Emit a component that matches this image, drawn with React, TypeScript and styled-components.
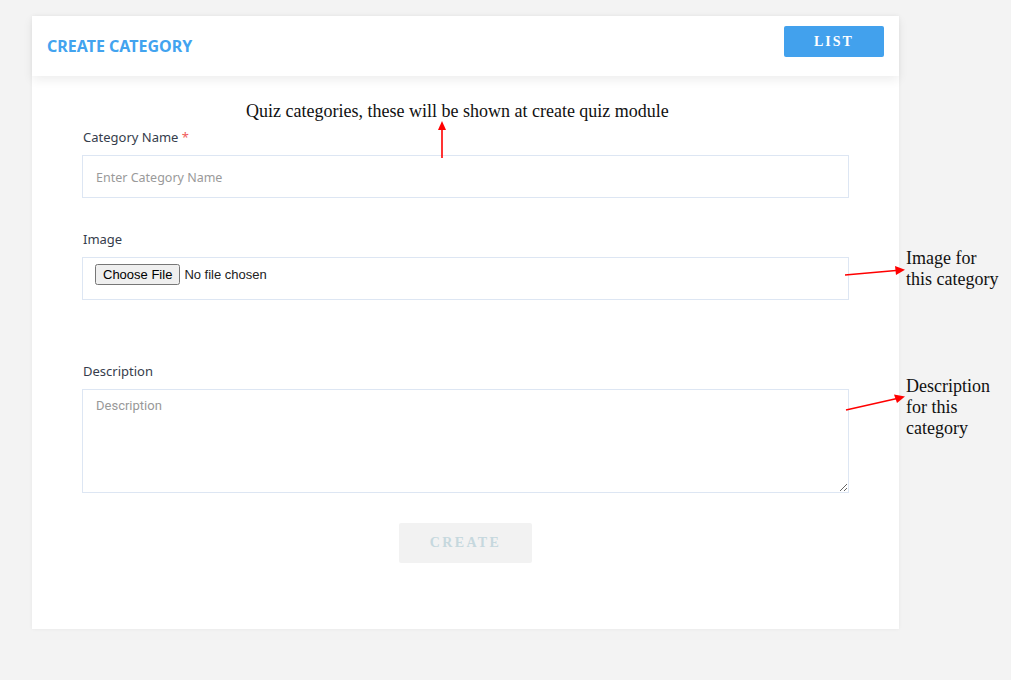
import React from "react";
import styled, { createGlobalStyle } from "styled-components";

const GlobalStyle = createGlobalStyle`
  html, body {
    margin: 0;
    padding: 0;
    background: #f3f3f3;
    font-family: "Noto Sans", "Open Sans", sans-serif;
  }
  * { box-sizing: border-box; }
`;

export default function App() {
  return (
    <>
      <GlobalStyle />
      <Page>
        <Card>
          <Header>
            <Title>CREATE CATEGORY</Title>
            <ListButton>LIST</ListButton>
          </Header>

          <Body>
            <Group>
              <Label>
                Category Name <Required>*</Required>
              </Label>
              <TextInput placeholder="Enter Category Name" />
            </Group>

            <Group $gap={62}>
              <Label>Image</Label>
              <FileBox>
                <input type="file" />
              </FileBox>
            </Group>

            <Group $gap={30}>
              <Label>Description</Label>
              <TextArea placeholder="Description" />
            </Group>

            <Actions>
              <CreateButton disabled>CREATE</CreateButton>
            </Actions>
          </Body>

          <Note $left={214} $top={85}>
            Quiz categories, these will be shown at create quiz module
          </Note>
          <Arrow $left={404} $top={105} width="12" height="38" viewBox="0 0 12 38">
            <line x1="6" y1="37" x2="6" y2="8" stroke="#f00" strokeWidth="1.6" />
            <polygon points="6,0 2,9 10,9" fill="#f00" />
          </Arrow>

          <Note $left={874} $top={232} $width={96}>
            Image for this category
          </Note>
          <Arrow $left={812} $top={248} width="62" height="14" viewBox="0 0 62 14">
            <line x1="1" y1="11" x2="52" y2="6.5" stroke="#f00" strokeWidth="1.6" />
            <polygon points="61,5.8 51,2 52,11" fill="#f00" />
          </Arrow>

          <Note $left={874} $top={360} $width={96}>
            Description for this category
          </Note>
          <Arrow $left={813} $top={374} width="62" height="24" viewBox="0 0 62 24">
            <line x1="1" y1="20" x2="52" y2="8.5" stroke="#f00" strokeWidth="1.6" />
            <polygon points="60,6.5 49,4.5 52,13" fill="#f00" />
          </Arrow>
        </Card>
      </Page>
    </>
  );
}

const Page = styled.div`
  padding: 16px 0 0 32px;
  min-height: 680px;
`;

const Card = styled.div`
  position: relative;
  width: 867px;
  height: 613px;
  background: #fff;
  box-shadow: 0 0 4px rgba(0, 0, 0, 0.05);
`;

const Header = styled.div`
  height: 60px;
  display: flex;
  align-items: center;
  justify-content: space-between;
  padding: 0 15px 0 15px;
  box-shadow: 0 4px 10px rgba(0, 0, 0, 0.07);
`;

const Title = styled.h1`
  margin: 0;
  font-family: "Noto Sans", sans-serif;
  font-size: 16px;
  font-weight: 700;
  color: #42a3ef;
`;

const ListButton = styled.button`
  width: 100px;
  height: 31px;
  margin-top: -9px;
  border: none;
  border-radius: 2px;
  background: #42a1ed;
  color: #fff;
  font-family: "Liberation Serif", serif;
  font-size: 14px;
  font-weight: 700;
  letter-spacing: 2px;
  padding-top: 2px;
`;

const Body = styled.div`
  padding: 52px 50px 0 50px;
`;

const Group = styled.div<{ $gap?: number }>`
  display: flex;
  flex-direction: column;
  margin-bottom: ${({ $gap }) => ($gap ?? 32)}px;
`;

const Label = styled.label`
  font-family: "Noto Sans", sans-serif;
  font-size: 13px;
  line-height: 18px;
  color: #363d4c;
  margin-bottom: 9px;
  padding-left: 1px;
`;

const Required = styled.span`
  color: #f05a5a;
`;

const TextInput = styled.input`
  height: 43px;
  border: 1px solid #dde6f3;
  padding: 2px 13px 0;
  font-family: "Noto Sans", sans-serif;
  font-size: 12.5px;
  color: #333;
  outline: none;

  &::placeholder {
    color: #9a9a9a;
  }
`;

const FileBox = styled.div`
  height: 43px;
  border: 1px solid #dde6f3;
  display: flex;
  align-items: flex-start;
  padding: 6px 12px 0;

  input {
    font-family: "Liberation Sans", Arial, sans-serif;
    font-size: 13px;
    color: #222;
  }
`;

const TextArea = styled.textarea`
  height: 104px;
  border: 1px solid #dde6f3;
  padding: 8px 13px;
  font-family: Roboto, sans-serif;
  font-size: 13px;
  color: #333;
  outline: none;
  resize: vertical;

  &::placeholder {
    color: #999;
  }
`;

const Actions = styled.div`
  display: flex;
  justify-content: center;
`;

const CreateButton = styled.button`
  width: 133px;
  height: 40px;
  border: none;
  border-radius: 2px;
  background: #f2f2f2;
  color: #c6d8de;
  font-family: "Liberation Serif", serif;
  font-size: 14px;
  font-weight: 700;
  letter-spacing: 2.4px;
`;

const Note = styled.div<{ $left: number; $top: number; $width?: number }>`
  position: absolute;
  left: ${({ $left }) => $left}px;
  top: ${({ $top }) => $top}px;
  width: ${({ $width }) => ($width ? `${$width}px` : "auto")};
  font-family: "Liberation Serif", serif;
  font-size: 18px;
  line-height: 21px;
  color: #111;
  white-space: ${({ $width }) => ($width ? "normal" : "nowrap")};
`;

const Arrow = styled.svg<{ $left: number; $top: number }>`
  position: absolute;
  left: ${({ $left }) => $left}px;
  top: ${({ $top }) => $top}px;
  overflow: visible;
`;
